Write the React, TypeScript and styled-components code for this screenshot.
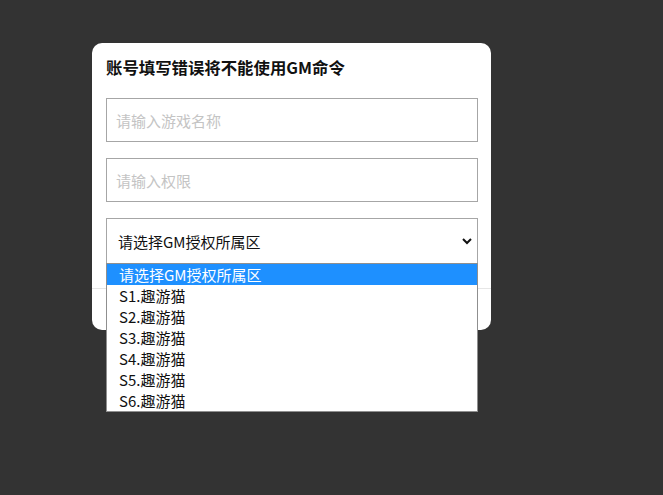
import React from 'react';
import styled, { createGlobalStyle } from 'styled-components';

const GlobalStyle = createGlobalStyle`
    html, body {
        margin: 0;
        padding: 0;
        background: #333333;
        font-family: "Noto Sans CJK SC", "Noto Sans", sans-serif;
    }
`;

const Page = styled.div`
    width: 663px;
    height: 495px;
    padding: 43px 0 0 92px;
    box-sizing: border-box;
`;

const Card = styled.div`
    position: relative;
    width: 399px;
    height: 287px;
    background: #ffffff;
    border-radius: 10px;
    display: flex;
    flex-direction: column;
    box-sizing: border-box;
`;

const Body = styled.div`
    padding: 12px 14px 0 14px;
    display: flex;
    flex-direction: column;
    gap: 16px;
    height: 245px;
    box-sizing: border-box;
`;

const Title = styled.h3`
    margin: 0 0 3px 0;
    height: 24px;
    line-height: 24px;
    font-size: 16.4px;
    font-weight: 700;
    color: #111;
`;

const Input = styled.input`
    width: 372px;
    height: 44px;
    box-sizing: border-box;
    border: 1px solid #a6a6a6;
    padding: 0 9px;
    font-family: inherit;
    font-size: 15px;
    color: #222;
    outline: none;
    &::placeholder {
        color: #c4c4c4;
    }
`;

const SelectBox = styled.div`
    position: relative;
    width: 372px;
    height: 46px;
    box-sizing: border-box;
    border: 1px solid #a6a6a6;
    display: flex;
    align-items: center;
    justify-content: space-between;
    padding: 0 4px 0 11px;
    font-size: 15px;
    color: #111;
`;

const Chevron = styled.svg`
    width: 12px;
    height: 12px;
`;

const Footer = styled.div`
    border-top: 1px solid #e6e6e6;
    flex: 1;
`;

const DropList = styled.ul`
    position: absolute;
    left: 14px;
    top: 220px;
    width: 372px;
    margin: 0;
    padding: 0;
    list-style: none;
    background: #fff;
    border: 1px solid #8f8f8f;
    box-sizing: border-box;
    z-index: 2;
`;

const Option = styled.li<{ $active?: boolean }>`
    height: 21px;
    line-height: 21px;
    padding-left: 12px;
    font-size: 15px;
    color: ${(p) => (p.$active ? '#ffffff' : '#111111')};
    background: ${(p) => (p.$active ? '#1e90ff' : 'transparent')};
`;

const options = ['请选择GM授权所属区', 'S1.趣游猫', 'S2.趣游猫', 'S3.趣游猫', 'S4.趣游猫', 'S5.趣游猫', 'S6.趣游猫'];

export default function App() {
    return (
        <>
            <GlobalStyle />
            <Page>
                <Card>
                    <Body>
                        <Title>账号填写错误将不能使用GM命令</Title>
                        <Input placeholder="请输入游戏名称" />
                        <Input placeholder="请输入权限" />
                        <SelectBox>
                            <span>请选择GM授权所属区</span>
                            <Chevron viewBox="0 0 12 12">
                                <path d="M2 4 L6 8 L10 4" fill="none" stroke="#111" strokeWidth="2" />
                            </Chevron>
                        </SelectBox>
                    </Body>
                    <Footer />
                    <DropList>
                        {options.map((o, i) => (
                            <Option key={o} $active={i === 0}>
                                {o}
                            </Option>
                        ))}
                    </DropList>
                </Card>
            </Page>
        </>
    );
}
